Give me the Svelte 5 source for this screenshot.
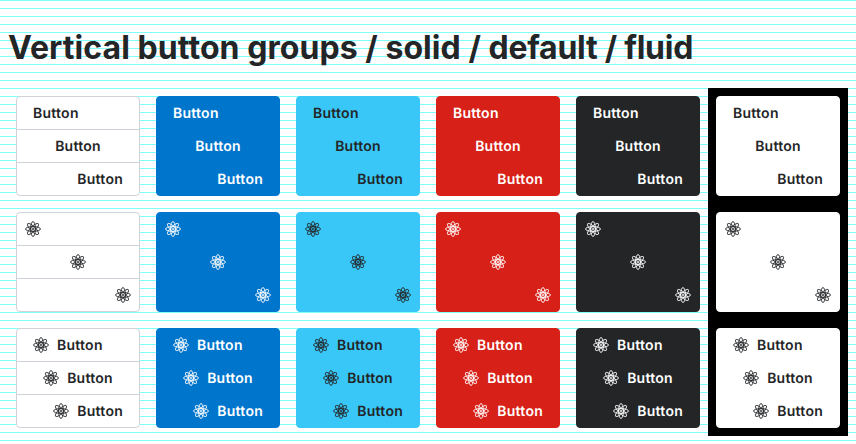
<script>
  const themes = ['outline', 'primary', 'info', 'danger', 'dark', 'inverse'];
  const kinds = ['text', 'icon', 'both'];
  const aligns = ['start', 'center', 'end'];
  const orbits = [0, 45, 90, 135];
</script>

{#snippet atom()}
  <svg class="icon" viewBox="0 0 16 16" aria-hidden="true">
    {#each orbits as angle}
      <ellipse cx="8" cy="8" rx="7.5" ry="2.4" transform="rotate({angle} 8 8)" />
    {/each}
    <circle cx="8" cy="8" r="1" />
  </svg>
{/snippet}

<main>
  <h1>Vertical button groups / solid / <span>default / fluid</span></h1>
  <div class="columns">
    {#each themes as theme}
      <div class="column {theme}">
        {#each kinds as kind}
          <div class="group">
            {#each aligns as align}
              <button class="{kind} {align}">
                {#if kind !== 'text'}{@render atom()}{/if}
                {#if kind !== 'icon'}<span>Button</span>{/if}
              </button>
            {/each}
          </div>
        {/each}
      </div>
    {/each}
  </div>
</main>

<style>
  main {
    box-sizing: border-box;
    width: 856px;
    height: 444px;
    padding: 24px 8px 8px;
    overflow: hidden;
    font-family: Inter, sans-serif;
    color: #232527;
    background: repeating-linear-gradient(to bottom, #80ffff 0, #80ffff 1px, #fff 1px, #fff 8px);
  }
  h1 {
    margin: 0 0 16px;
    font-size: 32px;
    line-height: 48px;
    font-weight: 700;
    letter-spacing: 0.06px;
    white-space: nowrap;
  }
  h1 span { letter-spacing: -0.26px; }
  .columns {
    display: flex;
  }
  .column {
    display: flex;
    flex-direction: column;
    gap: 16px;
    box-sizing: border-box;
    width: 140px;
    padding: 8px;
    --bg: #fff;
    --fg: #232527;
    --line: var(--bg);
  }
  .outline { --line: #cfd2d8; }
  .primary { --bg: #0075cc; --fg: #fff; }
  .info { --bg: #38c7f6; }
  .danger { --bg: #d72017; --fg: #fff; }
  .dark { --bg: #232527; --fg: #fff; }
  .inverse { background: #000; }
  .group {
    display: flex;
    flex-direction: column;
  }
  button {
    display: flex;
    align-items: center;
    gap: 8px;
    box-sizing: border-box;
    height: 34px;
    margin: 0;
    padding: 0 16px;
    border: 1px solid var(--line);
    background: var(--bg);
    color: var(--fg);
    font: 600 14px/16px Inter, sans-serif;
    letter-spacing: 0.25px;
    text-rendering: geometricPrecision;
  }
  button span { padding-top: 2px; }
  button + button { margin-top: -1px; }
  button:first-child { border-radius: 4px 4px 0 0; }
  button:last-child { border-radius: 0 0 4px 4px; }
  button.icon { padding: 0 8px; }
  .start { justify-content: flex-start; }
  .center { justify-content: center; }
  .end { justify-content: flex-end; }
  svg {
    display: block;
    width: 16px;
    height: 16px;
    flex: none;
    fill: none;
    stroke: currentColor;
    stroke-width: 0.9;
  }
</style>
